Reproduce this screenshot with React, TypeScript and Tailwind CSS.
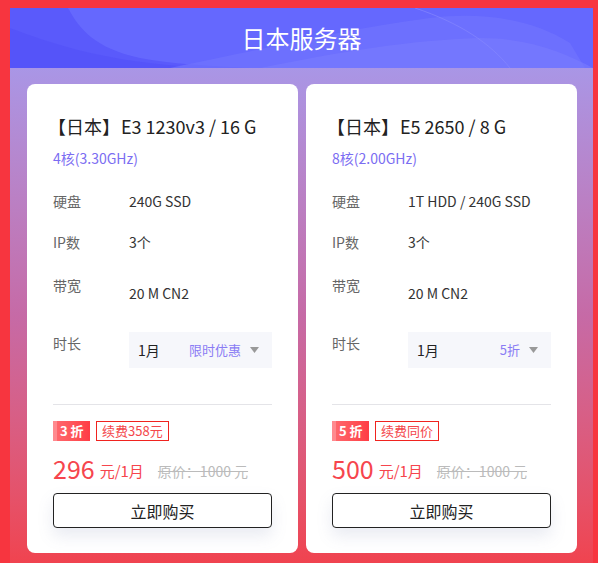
import React from 'react';

type Plan = {
  name: string;
  cpu: string;
  disk: string;
  ip: string;
  bw: string;
  tag: string;
  discount: string;
  renew: string;
  price: string;
};

const plans: Plan[] = [
  { name: 'E3 1230v3 / 16 G', cpu: '4核(3.30GHz)', disk: '240G SSD', ip: '3个', bw: '20 M CN2', tag: '限时优惠', discount: '3', renew: '续费358元', price: '296' },
  { name: 'E5 2650 / 8 G', cpu: '8核(2.00GHz)', disk: '1T HDD / 240G SSD', ip: '3个', bw: '20 M CN2', tag: '5折', discount: '5', renew: '续费同价', price: '500' },
];

function HeaderWaves() {
  return (
    <svg className="absolute inset-0 h-full w-full" viewBox="0 0 583 60" preserveAspectRatio="none">
      <rect width="583" height="60" fill="#6568fe" />
      <path d="M0 0 L58 0 C70 22 85 40 130 50 C160 56 200 58 240 60 L0 60 Z" fill="#5a5afb" />
      <path d="M0 20 C40 35 90 52 170 58 L170 60 L0 60 Z" fill="#5250f8" opacity="0.6" />
      <path d="M160 60 C260 40 330 22 420 10 C470 4 520 10 560 35 L575 60 Z" fill="#7173fd" opacity="0.7" />
      <path d="M250 60 C330 44 400 32 470 30 C520 30 555 45 583 60 Z" fill="#7a7cfd" opacity="0.6" />
      <path d="M405 0 C450 15 480 35 500 60" stroke="#8486fd" strokeWidth="1" fill="none" opacity="0.7" />
    </svg>
  );
}

function Card({ p }: { p: Plan }) {
  return (
    <div className="flex flex-1 flex-col rounded-lg bg-white px-[26px] pt-[30px] pb-[25px]">
      <div className="text-[18px] leading-[24px] text-[#222]">
        <span className="-ml-[5px]">【日本】</span>
        <span className="ml-[1px]">{p.name}</span>
      </div>
      <div className="mt-[10px] text-[14px] leading-[20px] text-[#7b6df2]">{p.cpu}</div>
      <div className="mt-[23px] flex text-[14px] leading-[20px]">
        <div className="w-[76px] text-[#666]">硬盘</div>
        <div className="text-[#333]">{p.disk}</div>
      </div>
      <div className="mt-[21px] flex text-[14px] leading-[20px]">
        <div className="w-[76px] text-[#666]">IP数</div>
        <div className="text-[#333]">{p.ip}</div>
      </div>
      <div className="mt-[23px] flex text-[14px] leading-[20px]">
        <div className="w-[76px] text-[#666]">带宽</div>
        <div className="pt-[8px] text-[#333]">{p.bw}</div>
      </div>
      <div className="mt-[29px] flex text-[14px]">
        <div className="mt-[1px] w-[76px] leading-[20px] text-[#666]">时长</div>
        <div className="flex h-[36px] flex-1 items-center bg-[#f6f7fb] pr-[13px] pl-[9px]">
          <span className="flex-1 text-[14px] text-[#222]">1月</span>
          <span className="text-[13px] text-[#8a7cf4]">{p.tag}</span>
          <svg className="ml-[9px]" width="9" height="6" viewBox="0 0 9 6">
            <path d="M0 0 H9 L4.5 6 Z" fill="#999" />
          </svg>
        </div>
      </div>
      <div className="mt-[36px] h-px bg-[#e4e4e8]" />
      <div className="mt-[16px] flex items-center gap-[6px]">
        <div className="flex h-[20px] w-[37px] items-center bg-gradient-to-r from-[#ff6a70] to-[#ff3c44]">
          <div className="h-full w-[4px] bg-[#ff8a8f]" />
          <span className="ml-[3px] text-[13px] font-bold text-white">{p.discount} 折</span>
        </div>
        <div className="flex h-[20px] items-center border border-[#f0231f] px-[5px] text-[13px] text-[#f4474c]">{p.renew}</div>
      </div>
      <div className="mt-[12px] flex h-[30px] items-end text-[#f6454d]">
        <span className="text-[25px] leading-[30px]">{p.price}</span>
        <span className="ml-[5px] text-[15px] leading-[24px]">元/1月</span>
        <span className="ml-[14px] text-[14px] leading-[24px] text-[#bbb] line-through">原价：1000 元</span>
      </div>
      <button className="mt-[10px] h-[35px] rounded border border-[#222] bg-white text-[16px] text-[#222] shadow-[0_8px_16px_rgba(110,120,170,0.15)]">
        立即购买
      </button>
    </div>
  );
}

export default function App() {
  return (
    <div className="h-[563px] w-[598px] overflow-hidden bg-[#f7353f] pt-[8px] pl-[10px] pr-[5px]" style={{ fontFamily: '"Noto Sans CJK SC", "Noto Sans", sans-serif' }}>
      <div className="flex h-[555px] flex-col">
        <div className="relative flex h-[60px] items-center justify-center">
          <HeaderWaves />
          <h1 className="relative text-[24px] text-white">日本服务器</h1>
        </div>
        <div className="flex flex-1 gap-[8px] bg-gradient-to-b from-[#a996e6] via-[#c66aa6] to-[#f0434f] pt-[16px] pr-[16px] pb-[10px] pl-[17px]">
          {plans.map((p) => (
            <Card key={p.name} p={p} />
          ))}
        </div>
      </div>
    </div>
  );
}
